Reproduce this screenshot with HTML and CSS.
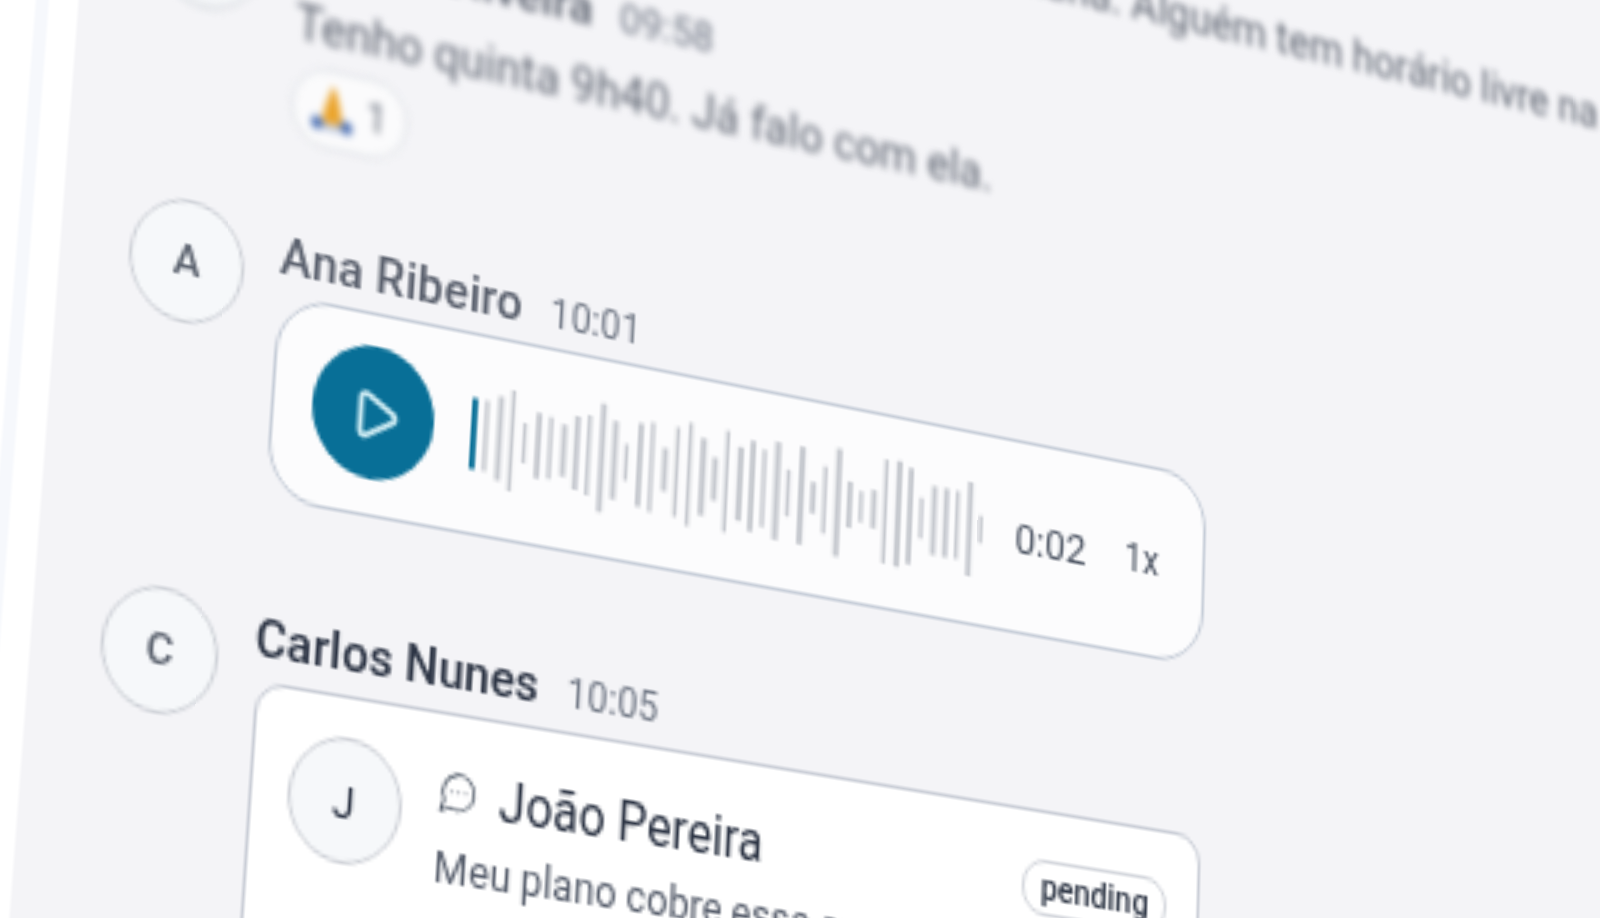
FILE: index.html
```html
<!DOCTYPE html>
<html lang="pt">
    <head>
        <meta charset="UTF-8">
        <meta name="viewport" content="width=device-width, initial-scale=1.0">
        <title>Chat da clínica</title>
        <link rel="stylesheet" href="styles.css">
    </head>
    <body>
        <div class="stage">
            <aside class="sidebar">
                <div class="sidebar-edge"></div>
            </aside>
            <main class="chat">
                <section class="msg msg-first blur-3">
                    <div class="avatar">P</div>
                    <div class="msg-body">
                        <div class="msg-head"><span class="msg-name">Paula Menezes</span><span class="msg-time">09:52</span></div>
                        <p class="msg-text">A Dona Lúcia quer remarcar pra a semana. Alguém tem horário livre na quinta?</p>
                    </div>
                </section>
                <section class="msg msg-reacted blur-2">
                    <div class="avatar">M</div>
                    <div class="msg-body">
                        <div class="msg-head"><span class="msg-name">Marta Oliveira</span><span class="msg-time">09:58</span></div>
                        <p class="msg-text">Tenho quinta 9h40. Já falo com ela.</p>
                        <div class="reaction">
                            <svg class="reaction-emoji" viewBox="0 0 24 24">
                                <path d="M12 1c1.700 3 4.300 10 5.500 19H6.500C7.700 11 10.300 4 12 1z" fill="#eba52e"/>
                                <circle cx="4.500" cy="20" r="3.200" fill="#4a6fb5"/>
                                <circle cx="19.500" cy="20" r="3.200" fill="#4a6fb5"/>
                                <rect x="8" y="20" width="8" height="3" fill="#b9c6de"/>
                            </svg>
                            <span>1</span>
                        </div>
                    </div>
                </section>
                <section class="msg msg-audio">
                    <div class="avatar blur-1">A</div>
                    <div class="msg-body">
                        <div class="msg-head blur-1"><span class="msg-name">Ana Ribeiro</span><span class="msg-time">10:01</span></div>
                        <div class="audio-card">
                            <button class="play-btn">
                                <svg class="play-icon" viewBox="0 0 24 24">
                                    <path d="M5 5a2 2 0 0 1 3.008-1.728l11.997 6.998a2 2 0 0 1 .003 3.458l-12 7A2 2 0 0 1 5 19z"/>
                                </svg>
                            </button>
                            <svg class="wave" viewBox="0 0 178 34" preserveAspectRatio="none">
                                <rect class="wave-played" x="0" y="6.500" width="1.900" height="21"/>
                                <rect x="4.280" y="6.500" width="1.400" height="21"/>
                                <rect x="8.560" y="4.500" width="1.900" height="25"/>
                                <rect x="12.840" y="2" width="1.400" height="30"/>
                                <rect x="17.120" y="11" width="1.300" height="12"/>
                                <rect x="21.400" y="7.250" width="1.900" height="19.500"/>
                                <rect x="25.680" y="7.750" width="1.400" height="18.500"/>
                                <rect x="29.960" y="9.250" width="1.900" height="15.500"/>
                                <rect x="34.240" y="6" width="1.900" height="22"/>
                                <rect x="38.520" y="5" width="1.400" height="24"/>
                                <rect x="42.800" y=".750" width="1.900" height="32.500"/>
                                <rect x="47.080" y="5.250" width="1.900" height="23.500"/>
                                <rect x="51.360" y="11.500" width="1.300" height="11"/>
                                <rect x="55.640" y="4.500" width="1.900" height="25"/>
                                <rect x="59.920" y="3.500" width="1.400" height="27"/>
                                <rect x="64.200" y="10.500" width="1.900" height="13"/>
                                <rect x="68.480" y="3.500" width="1.400" height="27"/>
                                <rect x="72.760" y="1.400" width="1.400" height="31.200"/>
                                <rect x="77.040" y="5.350" width="2.100" height="23.300"/>
                                <rect x="81.320" y="10.500" width="1.900" height="13"/>
                                <rect x="85.600" y="1.650" width="1.400" height="30.700"/>
                                <rect x="89.880" y="5.850" width="2.100" height="22.300"/>
                                <rect x="94.160" y="3.200" width="1.900" height="27.600"/>
                                <rect x="98.440" y="5.350" width="1.400" height="23.300"/>
                                <rect x="102.720" y="2.150" width="2.100" height="29.700"/>
                                <rect x="107" y="9.850" width="1.400" height="14.300"/>
                                <rect x="111.280" y="2.150" width="2.100" height="29.700"/>
                                <rect x="115.560" y="12.250" width="1.900" height="9.500"/>
                                <rect x="119.840" y="6.650" width="1.400" height="20.700"/>
                                <rect x="124.120" y=".550" width="2.100" height="32.900"/>
                                <rect x="128.400" y="9.950" width="1.900" height="14.100"/>
                                <rect x="132.680" y="12.350" width="1.400" height="9.300"/>
                                <rect x="136.960" y="11.150" width="1.900" height="11.700"/>
                                <rect x="141.240" y="1.100" width="1.400" height="31.800"/>
                                <rect x="145.520" y=".800" width="2.100" height="32.400"/>
                                <rect x="149.800" y="2.300" width="1.900" height="29.400"/>
                                <rect x="154.080" y="10.650" width="1.400" height="12.700"/>
                                <rect x="158.360" y="6.400" width="1.900" height="21.200"/>
                                <rect x="162.640" y="6.400" width="1.900" height="21.200"/>
                                <rect x="166.920" y="6.400" width="1.400" height="21.200"/>
                                <rect x="171.200" y="3" width="1.900" height="29"/>
                                <rect x="175.480" y="12.750" width="1.400" height="8.500"/>
                            </svg>
                            <span class="audio-time">0:02</span>
                            <span class="audio-speed">1x</span>
                        </div>
                    </div>
                </section>
                <section class="msg msg-last">
                    <div class="avatar">C</div>
                    <div class="msg-body">
                        <div class="msg-head"><span class="msg-name msg-name-dark">Carlos Nunes</span><span class="msg-time">10:05</span></div>
                        <div class="ticket-card">
                            <div class="avatar avatar-dark">J</div>
                            <div class="ticket-main">
                                <div class="ticket-head">
                                    <svg class="ticket-icon" viewBox="0 0 24 24">
                                        <path d="M7.900 20A9 9 0 1 0 4 16.100L2 22Z"/>
                                        <path d="M8 12h.01M12 12h.01M16 12h.01"/>
                                    </svg>
                                    <span class="ticket-name">João Pereira</span>
                                    <span class="badge">pending</span>
                                </div>
                                <p class="ticket-text">Meu plano cobre essa consulta?</p>
                            </div>
                        </div>
                    </div>
                </section>
            </main>
        </div>
    </body>
</html>
```

FILE: styles.css
```css
html, body {
    margin: 0;
    height: 100%;
    overflow: hidden;
    background-color: #ffffff;
}
body {
    font-family: Roboto, "Liberation Sans", sans-serif;
}
/* the whole app is photographed at an angle, so it is tilted as one flat sheet */
.stage {
    display: flex;
    width: 1500px;
    height: 1000px;
    transform-origin: 0 0;
    transform: matrix3d(3.2262, .70182, 0, .00026681, -.26422, 3.34986, 0, -.00014871, 0, 0, 1, 0, 277.83, 296.53, 0, 1) translate(-272px, -300px);
}
.sidebar {
    flex: 0 0 203.500px;
    display: flex;
    justify-content: flex-end;
    background-color: #ffffff;
}
.sidebar-edge {
    width: 4px;
    margin-right: 9px;
    background-color: #f6f8fc;
    filter: blur(.6px);
}
.chat {
    flex: 1;
    padding: 119.600px 0 0 21.500px;
    background-color: #f4f4f7;
}
/* the lens is focused on the lower rows, the upper ones fall out of focus */
.blur-1 {
    filter: blur(.35px);
}
.blur-2 {
    filter: blur(.9px);
}
.blur-3 {
    filter: blur(1.100px);
}
.msg {
    display: flex;
    gap: 11px;
}
.msg-first {
    margin-bottom: 24.400px;
}
.msg-reacted {
    margin-bottom: 24px;
}
.msg-audio {
    margin-bottom: 30px;
}
.avatar {
    flex: 0 0 36px;
    height: 36px;
    box-sizing: border-box;
    display: flex;
    align-items: center;
    justify-content: center;
    border: .6px solid #cfd2d8;
    border-radius: 50%;
    background-color: #f6f8fa;
    color: #5d6470;
    font-size: 13px;
    font-weight: 500;
}
.msg-audio .avatar {
    margin-top: -1px;
}
.msg-reacted .avatar {
    margin-top: -2px;
}
.avatar-dark {
    color: #2c3444;
    font-weight: 400;
}
.msg-body {
    width: 320px;
}
.msg-head {
    display: flex;
    align-items: baseline;
    gap: 9px;
    height: 18px;
    margin: .6px 0 3.400px;
    white-space: nowrap;
}
.msg-reacted .msg-head {
    margin: -1px 0 5px;
}
.msg-audio .msg-head {
    margin-bottom: 2.400px;
}
.msg-name {
    font-size: 15.100px;
    font-weight: 500;
    color: #5a606d;
}
.msg-reacted .msg-name {
    letter-spacing: .15px;
}
.msg-audio .msg-name {
    letter-spacing: .1px;
}
.msg-name-dark {
    color: #2c3444;
}
.msg-time {
    font-size: 12.300px;
    color: #747b88;
}
.msg-reacted .msg-time {
    font-size: 13px;
}
.msg-text {
    margin: 0;
    height: 20px;
    line-height: 20px;
    font-size: 15px;
    color: #636975;
    white-space: nowrap;
}
.reaction {
    display: inline-flex;
    align-items: center;
    gap: 3px;
    box-sizing: border-box;
    height: 24px;
    margin-top: 2px;
    padding: 0 6px 0 5px;
    border: .5px solid #dfe2e7;
    border-radius: 12px;
    background-color: #fbfbfc;
    color: #7b818d;
    font-size: 13px;
}
.reaction-emoji {
    width: 15px;
    height: 15px;
}
.audio-card {
    display: flex;
    align-items: center;
    box-sizing: border-box;
    width: 320px;
    height: 60px;
    padding: 0 16px 0 11.500px;
    border: .6px solid #c6cdd8;
    border-radius: 17px;
    background-color: #fcfcfd;
}
.play-btn {
    flex: 0 0 39.500px;
    height: 39px;
    display: flex;
    align-items: center;
    justify-content: center;
    padding: 0;
    border: none;
    border-radius: 50%;
    background-color: #086f97;
}
.play-icon {
    width: 16.500px;
    height: 16.500px;
    margin-left: 1px;
    fill: none;
    stroke: #cdebf3;
    stroke-width: 2.600;
    stroke-linejoin: round;
}
.wave {
    flex: 0 0 176px;
    height: 34px;
    margin-left: 11.900px;
    fill: #c6c9cf;
}
.wave-played {
    fill: #086f97;
}
.audio-time {
    margin-left: 10.500px;
    font-size: 13.500px;
    color: #4f5765;
}
.audio-speed {
    margin: 1px 0 0 auto;
    font-size: 12px;
    color: #4f5765;
}
.ticket-card {
    display: flex;
    gap: 12px;
    box-sizing: border-box;
    width: 320px;
    height: 120px;
    margin-left: 1px;
    padding: 11.500px 11px 11.500px 10.700px;
    border: .6px solid #c9cdd6;
    border-radius: 9px;
    background-color: #ffffff;
}
.ticket-main {
    flex: 1;
    min-width: 0;
}
.ticket-head {
    display: flex;
    align-items: center;
    height: 22px;
    margin-bottom: 1.900px;
}
.ticket-icon {
    width: 13.500px;
    height: 13.500px;
    margin: -1px 6.600px 0 -1px;
    fill: none;
    stroke: #4b5563;
    stroke-width: 1.400;
    stroke-linecap: round;
    stroke-linejoin: round;
}
.ticket-name {
    padding-top: 2px;
    font-size: 15.600px;
    color: #2c3444;
}
.badge {
    margin-left: auto;
    box-sizing: border-box;
    height: 17px;
    line-height: 16px;
    padding: 0 5.500px 0 5.600px;
    border: .6px solid #d3d6dc;
    border-radius: 8px;
    color: #2f3746;
    font-size: 10.800px;
    font-weight: 500;
}
.ticket-text {
    margin: 0 0 0 -.6px;
    font-size: 12.700px;
    line-height: 18px;
    color: #565d6b;
}
```
